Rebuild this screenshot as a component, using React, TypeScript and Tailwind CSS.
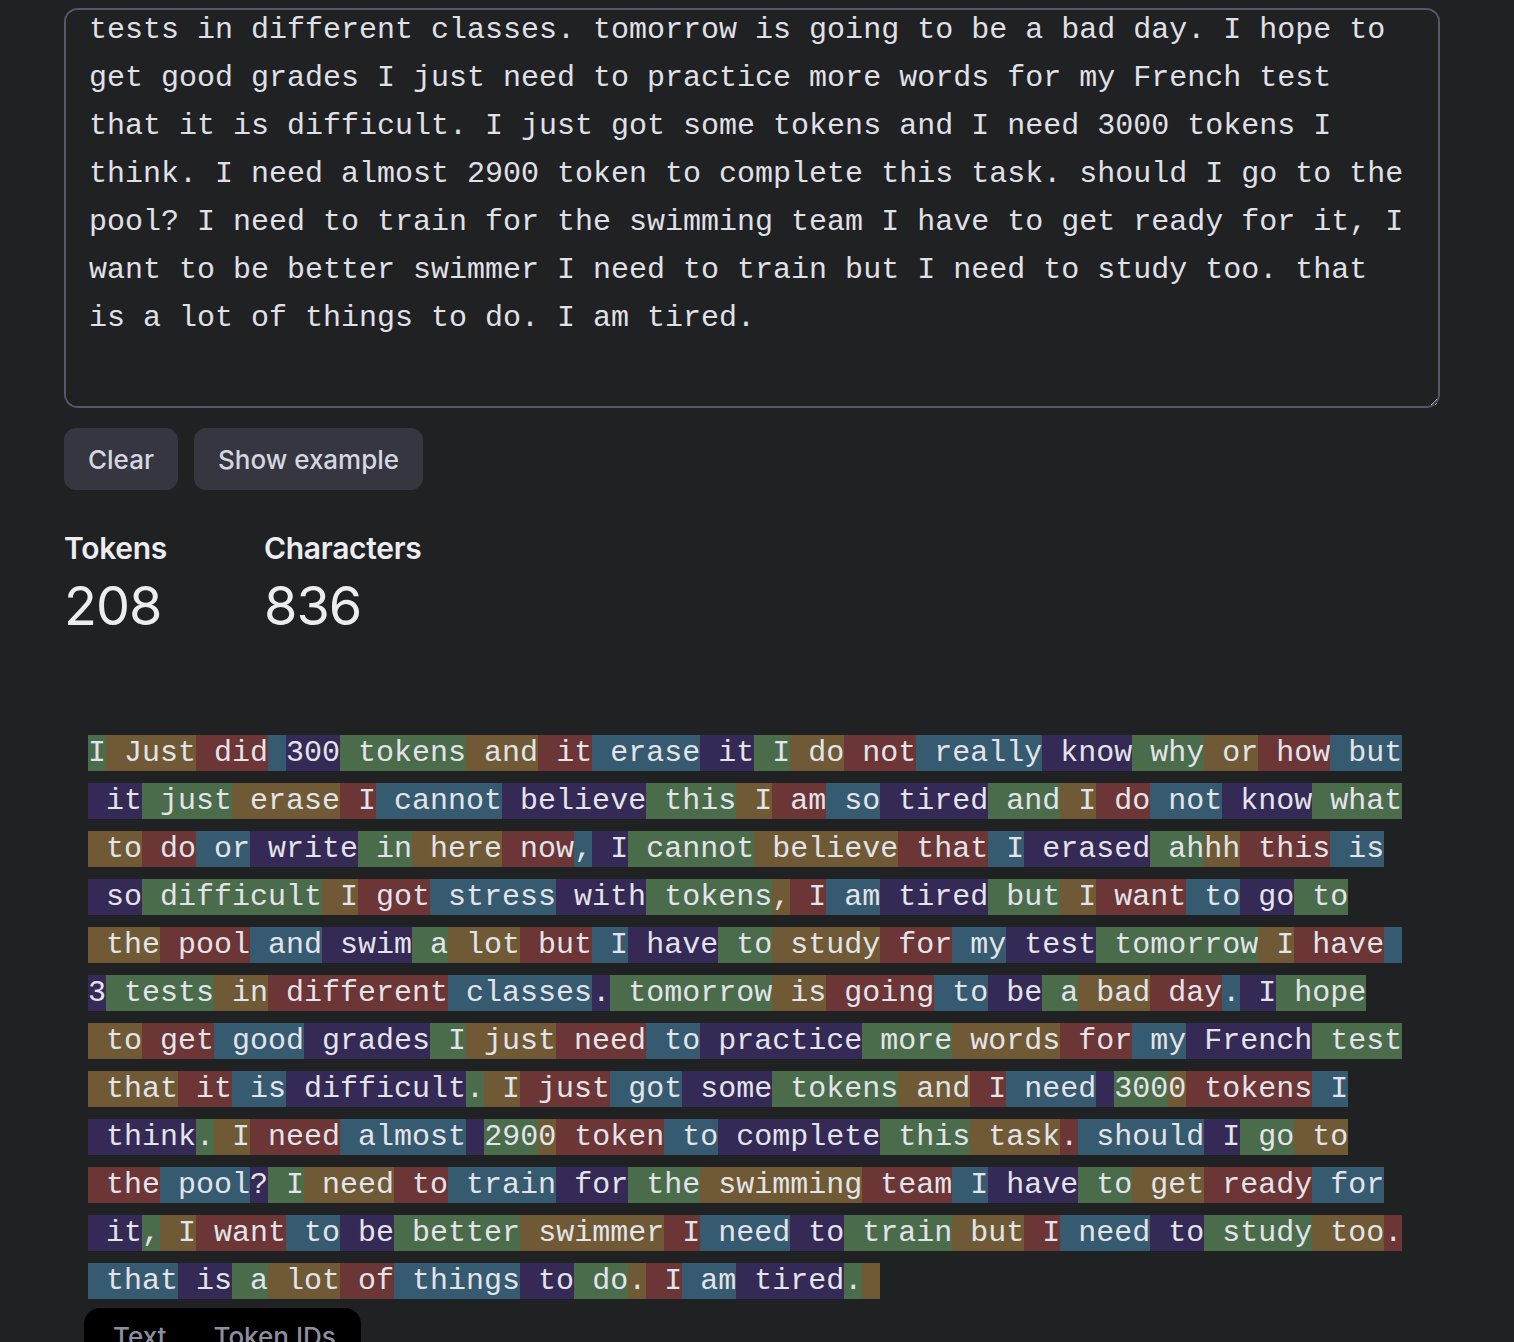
import React, { useEffect, useRef } from "react";

const TOKENS: string[] = [
  "I"," Just"," did"," ","300"," tokens"," and"," it"," erase"," it"," I"," do"," not"," really"," know"," why"," or"," how"," but",
  " it"," just"," erase"," I"," cannot"," believe"," this"," I"," am"," so"," tired"," and"," I"," do"," not"," know"," what",
  " to"," do"," or"," write"," in"," here"," now",","," I"," cannot"," believe"," that"," I"," erased"," ah","hh"," this"," is",
  " so"," difficult"," I"," got"," stress"," with"," tokens",","," I"," am"," tired"," but"," I"," want"," to"," go"," to",
  " the"," pool"," and"," swim"," a"," lot"," but"," I"," have"," to"," study"," for"," my"," test"," tomorrow"," I"," have"," ",
  "3"," tests"," in"," different"," classes","."," tomorrow"," is"," going"," to"," be"," a"," bad"," day","."," I"," hope",
  " to"," get"," good"," grades"," I"," just"," need"," to"," practice"," more"," words"," for"," my"," French"," test",
  " that"," it"," is"," difficult","."," I"," just"," got"," some"," tokens"," and"," I"," need"," ","300","0"," tokens"," I",
  " think","."," I"," need"," almost"," ","290","0"," token"," to"," complete"," this"," task","."," should"," I"," go"," to",
  " the"," pool","?"," I"," need"," to"," train"," for"," the"," swimming"," team"," I"," have"," to"," get"," ready"," for",
  " it",","," I"," want"," to"," be"," better"," swimmer"," I"," need"," to"," train"," but"," I"," need"," to"," study"," too",".",
  " that"," is"," a"," lot"," of"," things"," to"," do","."," I"," am"," tired","."," ",
];

const COLORS = ["bg-[#4b6c4b]", "bg-[#6f5a35]", "bg-[#6c3536]", "bg-[#365b70]", "bg-[#352a56]"];

const FULL_TEXT =
  "I Just did 300 tokens and it erase it I do not really know why or how but it just erase I cannot believe this I am so tired and I do not know what to do or write in here now, I cannot believe that I erased ahhh this is so difficult I got stress with tokens, I am tired but I want to go to the pool and swim a lot but I have to study for my test tomorrow I have 3 tests in different classes. tomorrow is going to be a bad day. I hope to get good grades I just need to practice more words for my French test that it is difficult. I just got some tokens and I need 3000 tokens I think. I need almost 2900 token to complete this task. should I go to the pool? I need to train for the swimming team I have to get ready for it, I want to be better swimmer I need to train but I need to study too. that is a lot of things to do. I am tired.\n";

export default function App() {
  const ref = useRef<HTMLTextAreaElement>(null);
  useEffect(() => {
    if (ref.current) ref.current.scrollTop = ref.current.scrollHeight;
  }, []);

  return (
    <div className="h-[1342px] overflow-hidden bg-[#202123] font-['Inter','Noto_Sans',sans-serif]">
      <div className="ml-16 w-[1376px] pt-2">
        <textarea
          ref={ref}
          defaultValue={FULL_TEXT}
          spellCheck={false}
          className="block h-[400px] w-full resize-y rounded-[14px] border-2 border-[#565869] bg-[#202123] px-[23px] py-4 font-['Liberation_Mono',monospace] text-[30px] leading-[48px] text-[#e0e0e8] outline-none [color-scheme:dark] [scrollbar-width:none]"
        />
        <div className="mt-5 flex gap-4">
          <button className="h-[62px] rounded-[12px] bg-[#353640] px-6 text-[26px] font-medium text-[#d6d6e0]">
            Clear
          </button>
          <button className="h-[62px] rounded-[12px] bg-[#353640] px-6 text-[26px] font-medium text-[#d6d6e0]">
            Show example
          </button>
        </div>
        <div className="mt-10 flex">
          <div className="w-[200px]">
            <div className="text-[30px] font-semibold leading-[36px] tracking-[-0.3px] text-[#ececf1]">Tokens</div>
            <div className="mt-2 text-[54px] font-normal leading-[64px] tracking-[-1px] text-[#ececf1]">208</div>
          </div>
          <div>
            <div className="text-[30px] font-semibold leading-[36px] tracking-[-0.3px] text-[#ececf1]">Characters</div>
            <div className="mt-2 text-[54px] font-normal leading-[64px] tracking-[-1px] text-[#ececf1]">836</div>
          </div>
        </div>
        <div className="ml-6 mt-[97px] flex w-[1320px] flex-wrap gap-y-3 font-['Liberation_Mono',monospace] text-[30px] leading-[37px] text-[#e3e3ea]">
          {TOKENS.map((t, i) => (
            <span key={i} className={`h-9 whitespace-pre ${COLORS[i % 5]}`}>
              {t}
            </span>
          ))}
        </div>
        <div className="ml-5 mt-[9px] flex h-[60px] w-[277px] gap-[47px] whitespace-nowrap rounded-t-[16px] bg-black pl-[29px] pt-[11px] text-[26px] font-medium leading-[36px] text-[#8e8ea0]">
          <span>Text</span>
          <span>Token IDs</span>
        </div>
      </div>
    </div>
  );
}
